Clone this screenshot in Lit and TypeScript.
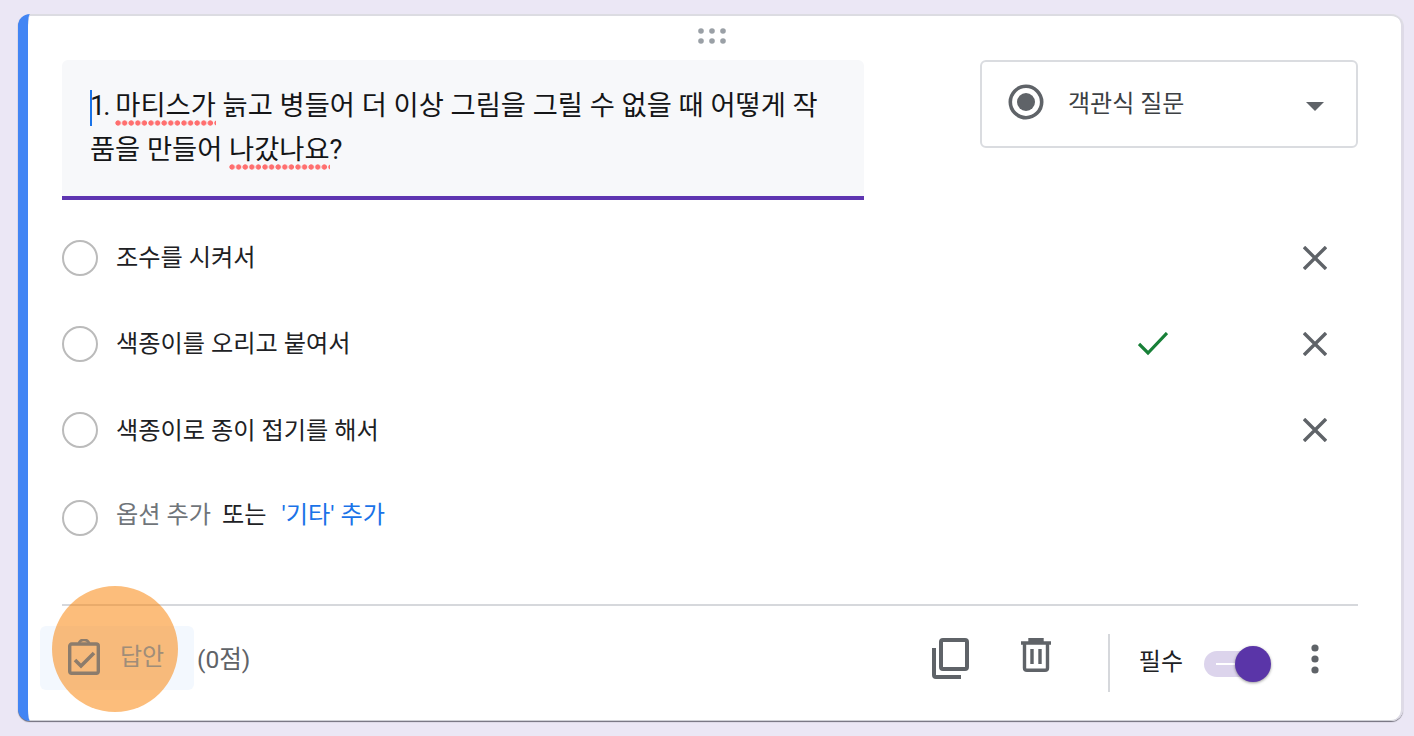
import { LitElement, html, css } from "lit";
import { customElement } from "lit/decorators.js";

const X = html`<svg class="x" width="24" height="24" viewBox="0 0 24 24"><path d="M1 1 L23 23 M23 1 L1 23" stroke="#5f6368" stroke-width="3.4" fill="none"/></svg>`;

@customElement("app-root")
export class AppRoot extends LitElement {
  static styles = css`
    :host { display: block; width: 1414px; height: 736px; background: #ebe7f5; overflow: hidden; font-family: "Roboto", "Noto Sans CJK KR", sans-serif; color: #202124; }
    .card { margin: 14px 11px 0 18px; height: 707px; background: #fff; border-radius: 12px; border-left: 10px solid #4285f4; box-shadow: inset 0 2px 0 #dcdce2, inset -2px 0 0 #dedbe6, inset 0 -1px 0 #cfd0d6, 0 1px 1px rgba(70,70,80,.75); box-sizing: border-box; padding: 0 45px 0 34px; position: relative; display: flex; flex-direction: column; }
    .handle { height: 46px; display: flex; justify-content: center; align-items: flex-start; padding: 14px 8px 0 0; box-sizing: border-box; flex: none; margin-right: -45px; margin-left: -34px; }
    .top { display: flex; justify-content: space-between; align-items: flex-start; height: 140px; flex: none; }
    .q { width: 802px; height: 140px; background: #f7f8fa; border-bottom: 4px solid #5e35b1; border-radius: 6px 6px 0 0; box-sizing: border-box; padding: 24px 28px; font-size: 27.3px; line-height: 44px; position: relative; color: #141517; }
    .caret { position: absolute; left: 28px; top: 30px; width: 2px; height: 36px; background: #1a73e8; }
    .num { letter-spacing: -2px; }
    .sq { position: relative; }
    .sq::after { content: ""; position: absolute; left: 0; right: 0; bottom: -4px; height: 6px; background-image: radial-gradient(circle at 3px 3px, #ff6f6f 2.3px, transparent 3px); background-size: 6.6px 6px; background-repeat: repeat-x; }
    .select { width: 378px; height: 88px; border: 2px solid #dadce0; border-radius: 6px; box-sizing: border-box; display: flex; align-items: center; padding: 0 32px 5px 26px; font-size: 24px; color: #3c4043; }
    .select span { margin-left: 24px; flex: 1; }
    .tri { width: 0; height: 0; border-left: 9.5px solid transparent; border-right: 9.5px solid transparent; border-top: 9px solid #5f6368; margin-top: 10px; }
    .opts { flex: 1; display: flex; flex-direction: column; padding-top: 15px; }
    .row { height: 86px; display: flex; align-items: center; font-size: 24.2px; color: #202124; flex: none; }
    .row.add { margin-top: 2px; }
    .radio { width: 36px; height: 36px; border: 2px solid #bbb; border-radius: 50%; box-sizing: border-box; margin-right: 18px; flex: none; }
    .label { flex: 1; margin-bottom: 5px; }
    .label.low { margin-bottom: 3px; }
    .add span { margin-bottom: 11px; }
    .check { margin-right: 135px; }
    .x { margin-right: 31px; flex: none; }
    .grey { color: #70757a; margin-right: 11px; }
    .blue { color: #1a73e8; margin-left: 15px; }
    .foot { border-top: 2px solid #d6d8dc; height: 117px; flex: none; display: flex; align-items: center; font-size: 24.6px; position: relative; color: #5f6368; box-sizing: border-box; }
    .answer { width: 154px; height: 64px; background: #f3f8fe; border-radius: 6px; margin-left: -22px; margin-bottom: 12px; display: flex; align-items: center; padding-left: 28px; box-sizing: border-box; gap: 20px; flex: none; }
    .answer > * { position: relative; z-index: 2; }
    .answer svg { margin-bottom: 2px; }
    .answer span { color: #a08d79; font-size: 24px; margin-bottom: 6px; }
    .halo { position: absolute; left: -10px; top: -20px; width: 126px; height: 126px; border-radius: 50%; background: rgba(250,135,15,.55); z-index: 1; }
    .score { margin-left: 3px; margin-bottom: 14px; flex: 1; }
    .ic { flex: none; }
    .copy { margin-bottom: 11px; }
    .trash { margin-left: 52px; margin-bottom: 18px; }
    .div { width: 2px; height: 58px; background: #d6d8dc; margin: 0 29px 2px 57px; flex: none; }
    .req { color: #202124; margin-right: 21px; font-size: 24px; margin-bottom: 9px; }
    .sw { width: 56px; height: 26px; position: relative; flex: none; }
    .track { position: absolute; left: 0; top: 0; right: 0; bottom: 0; background: #dcd4ec; border-radius: 13px 0 0 13px; }
    .dash { position: absolute; left: 12px; top: 12px; width: 20px; height: 2px; background: #fff; }
    .knob { position: absolute; right: -11px; top: -5px; width: 36px; height: 36px; border-radius: 50%; background: #5a35a8; box-shadow: 0 1px 3px rgba(0,0,0,.4); }
    .more { margin-left: 50px; margin-right: 38px; margin-bottom: 10px; flex: none; }
  `;
  render() {
    return html`<div class="card">
      <div class="handle"><svg width="28" height="16" viewBox="0 0 28 16" fill="#9aa0a6"><circle cx="3" cy="3" r="2.8"/><circle cx="14" cy="3" r="2.8"/><circle cx="25" cy="3" r="2.8"/><circle cx="3" cy="13" r="2.8"/><circle cx="14" cy="13" r="2.8"/><circle cx="25" cy="13" r="2.8"/></svg></div>
      <div class="top">
        <div class="q"><i class="caret"></i><span class="num">1.</span> <span class="sq">마티스가</span> 늙고 병들어 더 이상 그림을 그릴 수 없을 때 어떻게 작품을 만들어 <span class="sq">나갔나요</span>?</div>
        <div class="select">
          <svg width="36" height="36" viewBox="0 0 36 36"><circle cx="18" cy="18" r="15.7" fill="none" stroke="#5f6368" stroke-width="3.6"/><circle cx="18" cy="18" r="9" fill="#5f6368"/></svg>
          <span>객관식 질문</span><i class="tri"></i>
        </div>
      </div>
      <div class="opts">
        <div class="row"><i class="radio"></i><span class="label">조수를 시켜서</span>${X}</div>
        <div class="row"><i class="radio"></i><span class="label">색종이를 오리고 붙여서</span>
          <svg class="check" width="30" height="24" viewBox="0 0 30 24"><path d="M1 12 L10 21 L29 1" stroke="#188038" stroke-width="3.2" fill="none"/></svg>${X}</div>
        <div class="row"><i class="radio"></i><span class="label low">색종이로 종이 접기를 해서</span>${X}</div>
        <div class="row add"><i class="radio"></i><span class="grey">옵션 추가</span><span>또는</span><span class="blue">'기타' 추가</span></div>
      </div>
      <div class="foot">
        <div class="answer">
          <svg width="32" height="36" viewBox="0 0 32 36" fill="none" stroke="#8c7c6c" stroke-width="3.4"><rect x="1.7" y="5" width="28.6" height="29.3" rx="2"/><path d="M11 5 C11 -0.5 21 -0.5 21 5" stroke-width="2.6"/><path d="M7 21 L13 27 L26 14" stroke-width="3.6"/></svg>
          <span>답안</span>
        </div>
        <div class="halo"></div>
        <div class="score">(0점)</div>
        <svg class="ic copy" width="38" height="41" viewBox="0 0 38 41" fill="none" stroke="#5f6368" stroke-width="4"><path d="M12 2 H34 Q36 2 36 4 V29 Q36 31 34 31 H12 Q10 31 10 29 V4 Q10 2 12 2 Z"/><path d="M3 10 V37 Q3 39 5 39 H30"/></svg>
        <svg class="ic trash" width="30" height="34" viewBox="0 0 30 34" fill="none" stroke="#5f6368" stroke-width="3.4"><path d="M0 5 H30 M9 5 V1.7 H21 V5"/><path d="M3.5 5 V30 Q3.5 32.3 6 32.3 H24 Q26.5 32.3 26.5 30 V5"/><path d="M11 11 V26 M19 11 V26"/></svg>
        <div class="div"></div>
        <span class="req">필수</span>
        <div class="sw"><div class="track"></div><div class="dash"></div><div class="knob"></div></div>
        <svg class="more" width="10" height="30" viewBox="0 0 10 30" fill="#5f6368"><circle cx="5" cy="4" r="3.6"/><circle cx="5" cy="15" r="3.6"/><circle cx="5" cy="26" r="3.6"/></svg>
      </div>
    </div>`;
  }
}
